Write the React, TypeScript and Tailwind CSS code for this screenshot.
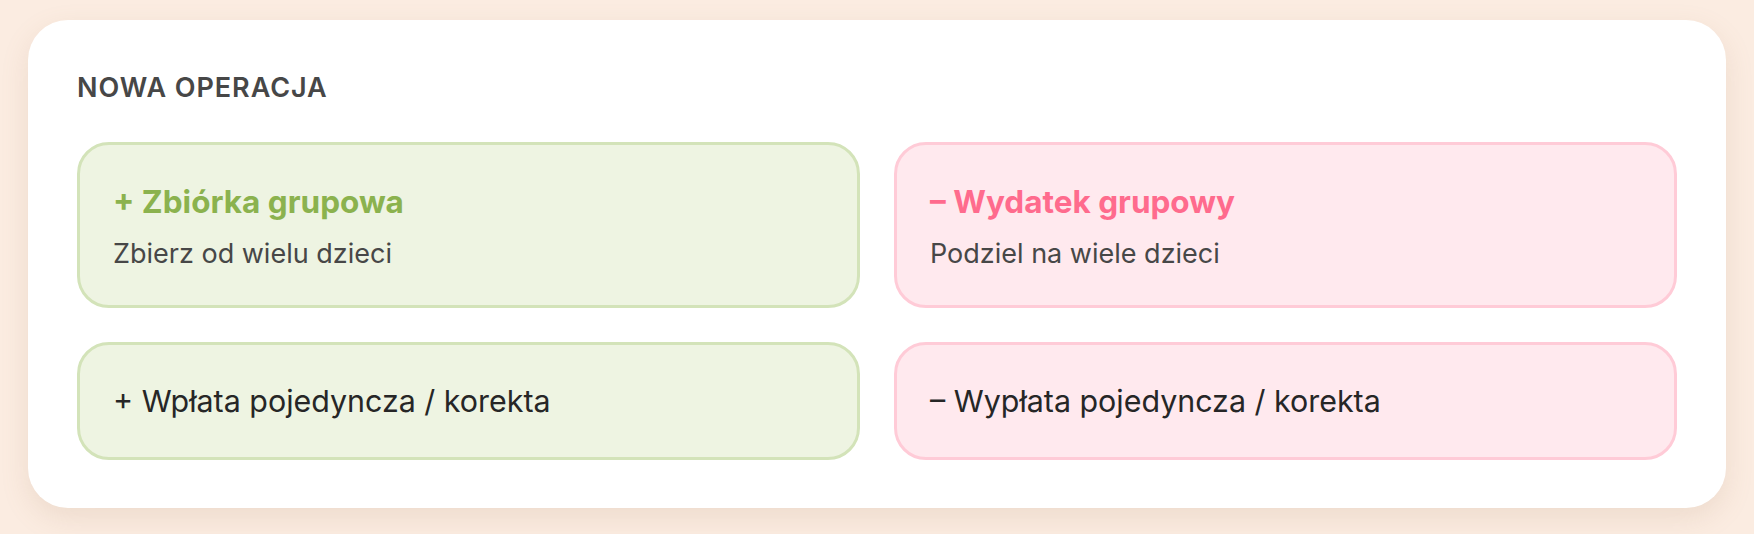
import React from "react";

interface Action {
  label: string;
  hint?: string;
  tone: "in" | "out";
}

const groupActions: Action[] = [
  { label: "+ Zbiórka grupowa", hint: "Zbierz od wielu dzieci", tone: "in" },
  { label: "– Wydatek grupowy", hint: "Podziel na wiele dzieci", tone: "out" },
];

const singleActions: Action[] = [
  { label: "+ Wpłata pojedyncza / korekta", tone: "in" },
  { label: "– Wypłata pojedyncza / korekta", tone: "out" },
];

const toneBox = {
  in: "border-[#d3e3b9] bg-[#eef4e2]",
  out: "border-[#ffcbd7] bg-[#ffe9ee]",
};

const toneTitle = {
  in: "text-[#8bb24e]",
  out: "text-[#ff6b8d]",
};

function GroupButton({ action }: { action: Action }) {
  return (
    <button
      type="button"
      className={`flex h-[166px] flex-col rounded-[32px] border-[3px] px-[33px] pt-[38px] text-left ${toneBox[action.tone]}`}
    >
      <span
        className={`text-[31.5px] font-bold leading-[37px] ${toneTitle[action.tone]}`}
      >
        {action.label}
      </span>
      <span className="mt-[17px] text-[27px] leading-[33px] text-[#474747]">
        {action.hint}
      </span>
    </button>
  );
}

function SingleButton({ action }: { action: Action }) {
  return (
    <button
      type="button"
      className={`flex h-[118px] items-center rounded-[32px] border-[3px] px-[33px] text-left ${toneBox[action.tone]}`}
    >
      <span className="text-[30.4px] leading-[36px] text-[#262626]">
        {action.label}
      </span>
    </button>
  );
}

export default function App() {
  return (
    <div
      className="min-h-screen w-full bg-[#fbece1] px-[28px] pt-[20px] pb-[26px]"
      style={{ fontFamily: "Inter, 'Noto Sans', sans-serif" }}
    >
      <div className="rounded-[40px] bg-white px-[49px] pt-[54px] pb-[48px] shadow-[0_10px_28px_rgba(170,130,100,0.16)]">
        <h2 className="text-[27px] font-semibold uppercase leading-[27px] tracking-[0.035em] text-[#474747]">
          Nowa operacja
        </h2>
        <div className="mt-[41px] grid grid-cols-2 gap-[34px]">
          {groupActions.map((a) => (
            <GroupButton key={a.label} action={a} />
          ))}
          {singleActions.map((a) => (
            <SingleButton key={a.label} action={a} />
          ))}
        </div>
      </div>
    </div>
  );
}
